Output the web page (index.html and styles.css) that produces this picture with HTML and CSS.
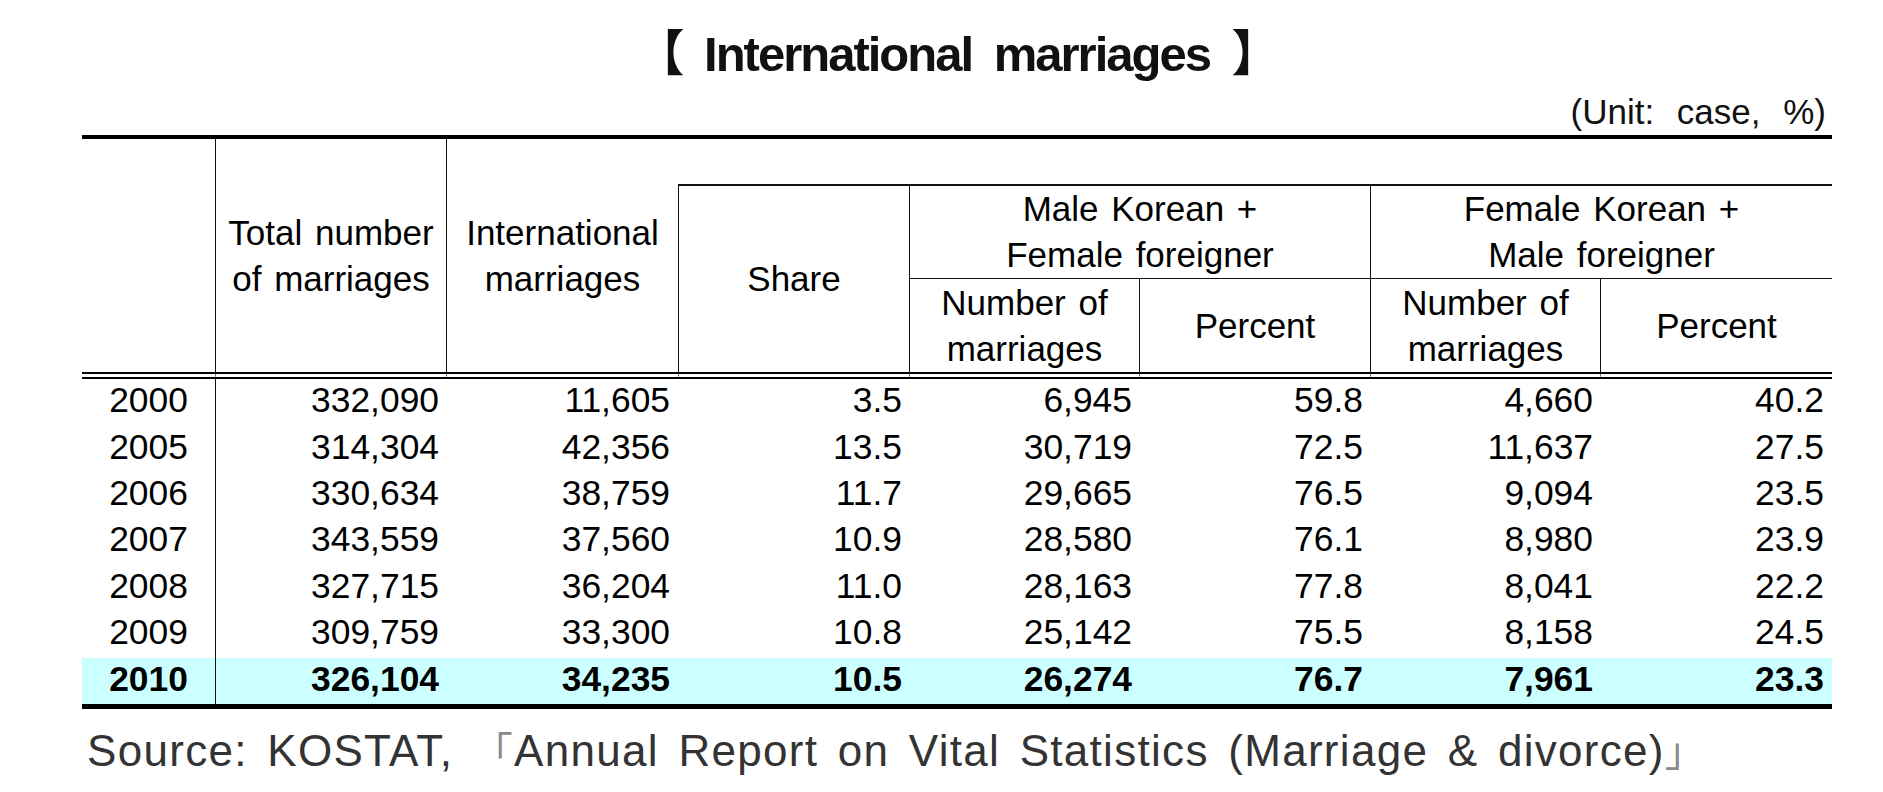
FILE: index.html
```html
<!DOCTYPE html>
<html lang="en">
<head>
<meta charset="utf-8">
<title>International marriages</title>
<link rel="stylesheet" href="styles.css">
</head>
<body>
<div class="page">
  <h1 class="title">【 International marriages 】</h1>
  <div class="unit">(Unit: case, %)</div>
  <table class="stats">
    <colgroup>
      <col class="c-year">
      <col class="c-w231">
      <col class="c-w231">
      <col class="c-w232">
      <col class="c-w230">
      <col class="c-w231">
      <col class="c-w230">
      <col class="c-w231">
    </colgroup>
    <thead>
      <tr class="row-a">
        <th rowspan="3" class="h-year"></th>
        <th rowspan="3" class="h-main h-total">Total number<br>of marriages</th>
        <th rowspan="3" class="h-main">International<br>marriages</th>
        <td colspan="5" class="h-blank"></td>
      </tr>
      <tr class="row-b">
        <th rowspan="2" class="h-share">Share</th>
        <th colspan="2" class="h-group h-group-male">Male Korean +<br>Female foreigner</th>
        <th colspan="2" class="h-group">Female Korean +<br>Male foreigner</th>
      </tr>
      <tr class="row-c">
        <th class="h-sub h-divided">Number of<br>marriages</th>
        <th class="h-sub h-divided">Percent</th>
        <th class="h-sub h-divided">Number of<br>marriages</th>
        <th class="h-sub">Percent</th>
      </tr>
    </thead>
    <tbody>
      <tr class="data"><td class="year">2000</td><td>332,090</td><td>11,605</td><td>3.5</td><td>6,945</td><td>59.8</td><td>4,660</td><td>40.2</td></tr>
      <tr class="data"><td class="year">2005</td><td>314,304</td><td>42,356</td><td>13.5</td><td>30,719</td><td>72.5</td><td>11,637</td><td>27.5</td></tr>
      <tr class="data"><td class="year">2006</td><td>330,634</td><td>38,759</td><td>11.7</td><td>29,665</td><td>76.5</td><td>9,094</td><td>23.5</td></tr>
      <tr class="data"><td class="year">2007</td><td>343,559</td><td>37,560</td><td>10.9</td><td>28,580</td><td>76.1</td><td>8,980</td><td>23.9</td></tr>
      <tr class="data"><td class="year">2008</td><td>327,715</td><td>36,204</td><td>11.0</td><td>28,163</td><td>77.8</td><td>8,041</td><td>22.2</td></tr>
      <tr class="data"><td class="year">2009</td><td>309,759</td><td>33,300</td><td>10.8</td><td>25,142</td><td>75.5</td><td>8,158</td><td>24.5</td></tr>
      <tr class="data latest"><td class="year">2010</td><td>326,104</td><td>34,235</td><td>10.5</td><td>26,274</td><td>76.7</td><td>7,961</td><td>23.3</td></tr>
    </tbody>
  </table>
  <p class="source">Source: KOSTAT, <span class="corner">「</span>Annual Report on Vital Statistics (Marriage &amp; divorce)<span class="corner">」</span></p>
</div>
</body>
</html>
```

FILE: styles.css
```css
* {
  box-sizing: border-box;
}

body {
  margin: 0;
  background: #ffffff;
  color: #000000;
  font-family: "Liberation Sans", Arial, "Noto Sans CJK KR", sans-serif;
}

.page {
  width: 1750px;
  margin-left: 82px;
}

.title {
  margin: 0;
  padding-top: 24px;
  height: 84px;
  font-size: 49px;
  line-height: 60px;
  font-weight: bold;
  text-align: center;
  letter-spacing: -2px;
  word-spacing: 10px;
  color: #111111;
}

.unit {
  margin-top: 8px;
  height: 40px;
  padding-right: 6px;
  font-size: 35px;
  line-height: 40px;
  text-align: right;
  word-spacing: 13px;
  color: #111111;
}

.stats {
  width: 1750px;
  margin-top: 3px;
  table-layout: fixed;
  border-collapse: separate;
  border-spacing: 0;
  border-top: 4px solid #000000;
  border-bottom: 5px solid #000000;
  font-size: 35.4px;
}

.c-year { width: 134px; }
.c-w230 { width: 230px; }
.c-w231 { width: 231px; }
.c-w232 { width: 232px; }

.stats th {
  padding: 0;
  font-size: 35px;
  font-weight: normal;
  line-height: 46px;
  text-align: center;
  vertical-align: middle;
  word-spacing: 3px;
}

.row-a { height: 45px; }
.row-b { height: 95px; }
.row-c { height: 100px; }

.h-blank {
  padding: 0;
}

.h-year {
  border-right: 1px solid #111111;
  border-bottom: 7px double #000000;
}

.h-main {
  border-bottom: 7px double #000000;
}

.h-total {
  border-right: 1px solid #111111;
}

.h-share {
  border-top: 2px solid #111111;
  border-left: 1px solid #111111;
  border-right: 1px solid #111111;
  border-bottom: 7px double #000000;
}

.h-group {
  border-top: 2px solid #111111;
  border-bottom: 1px solid #111111;
}

.h-group-male {
  border-right: 1px solid #111111;
}

.h-sub {
  border-bottom: 7px double #000000;
}

.h-divided {
  border-right: 1px solid #111111;
}

.data {
  height: 46.43px;
}

.data td {
  padding: 0 8px 4px 8px;
  line-height: 40px;
  text-align: right;
  vertical-align: middle;
  white-space: nowrap;
}

.data td.year {
  text-align: center;
  border-right: 1px solid #111111;
}

.latest td {
  background: #ccffff;
  font-weight: bold;
}

.source {
  margin: 14px 0 0 5px;
  font-family: "Liberation Sans", Arial, "Noto Sans CJK KR", sans-serif;
  font-size: 44px;
  line-height: 56px;
  letter-spacing: 1.3px;
  word-spacing: 6px;
  color: #333333;
  white-space: nowrap;
}

.corner {
  color: #8a8a8a;
  font-size: 40px;
}
```
